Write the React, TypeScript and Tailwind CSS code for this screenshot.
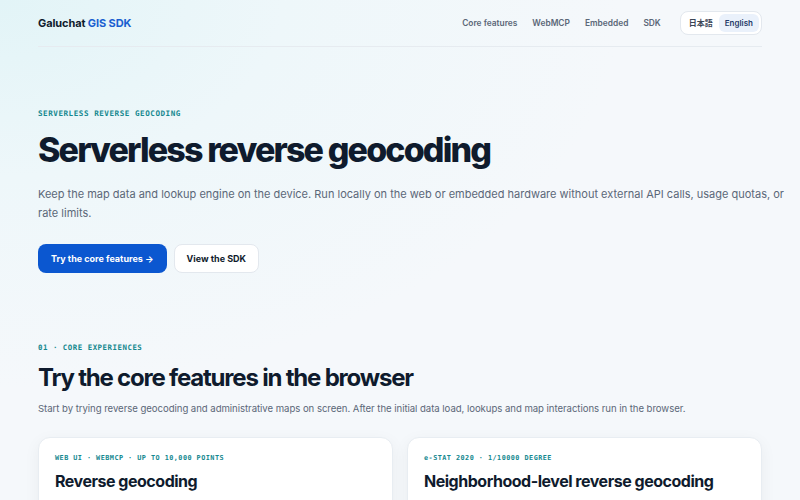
import React from "react";

const navLinks = ["Core features", "WebMCP", "Embedded", "SDK"];

const cards = [
  { eyebrow: "WEB UI · WEBMCP · UP TO 10,000 POINTS", title: "Reverse geocoding" },
  { eyebrow: "e-STAT 2020 · 1/10000 DEGREE", title: "Neighborhood-level reverse geocoding" },
];

const Eyebrow: React.FC<{ children: React.ReactNode; className?: string }> = ({ children, className }) => (
  <div
    className={`font-['DejaVu_Sans_Mono',monospace] font-bold tracking-[0.07em] text-[#14888f] ${className ?? ""}`}
  >
    {children}
  </div>
);

const App: React.FC = () => {
  return (
    <div className="h-[500px] bg-[#f5f8fb] bg-[radial-gradient(ellipse_at_0%_0%,#e2f4f7_0%,#eef7fa_25%,transparent_55%)] font-['Inter','Noto_Sans_CJK_JP',sans-serif] text-[#0f1b2d] overflow-hidden">
      <div className="w-[724px] mx-auto">
        <header className="flex items-center justify-between h-[47px] border-b border-[#e6ebf0]">
          <div className="text-[11px] font-bold tracking-[-0.01em]">
            Galuchat <span className="text-[#1a5fd0]">GIS SDK</span>
          </div>
          <div className="flex items-center">
            <nav className="flex items-center gap-[15px] text-[8.4px] font-semibold text-[#5b6778] mr-[19px]">
              {navLinks.map((l) => (
                <span key={l}>{l}</span>
              ))}
            </nav>
            <div className="flex items-center h-[24px] p-[2px] rounded-lg border border-[#e3e8ee] bg-white text-[8px] font-semibold">
              <span className="px-[6px] h-full flex items-center text-[#3c4656]">日本語</span>
              <span className="px-[6px] h-full flex items-center rounded-md bg-[#eaf1fb] text-[#1f3a68]">English</span>
            </div>
          </div>
        </header>

        <section className="pt-[61px]">
          <Eyebrow className="text-[7.6px] leading-[12px]">SERVERLESS REVERSE GEOCODING</Eyebrow>
          <h1 className="mt-[10px] text-[34px] leading-[40px] font-extrabold tracking-[-0.055em]">
            Serverless reverse geocoding
          </h1>
          <p className="mt-[15px] w-[750px] text-[11px] leading-[19px] text-[#5b6778]">
            Keep the map data and lookup engine on the device. Run locally on the web or embedded hardware without
            external API calls, usage quotas, or rate limits.
          </p>
          <div className="mt-[21px] flex gap-[7px]">
            <button className="h-[29px] px-[13px] rounded-lg bg-[#0b57d0] text-white text-[9px] font-bold">
              Try the core features →
            </button>
            <button className="h-[29px] px-[12px] rounded-lg bg-white border border-[#e3e8ee] text-[#0f1b2d] text-[9px] font-bold">
              View the SDK
            </button>
          </div>
        </section>

        <section className="pt-[70px]">
          <Eyebrow className="text-[7.4px] leading-[10px]">01 · CORE EXPERIENCES</Eyebrow>
          <h2 className="mt-[10px] text-[24px] leading-[30px] font-bold tracking-[-0.05em]">
            Try the core features in the browser
          </h2>
          <p className="mt-[9px] text-[9.6px] leading-[14px] tracking-[-0.005em] text-[#5b6778]">
            Start by trying reverse geocoding and administrative maps on screen. After the initial data load, lookups and
            map interactions run in the browser.
          </p>
          <div className="mt-[21px] grid grid-cols-2 gap-[14px]">
            {cards.map((c) => (
              <div
                key={c.title}
                className="h-[120px] rounded-xl bg-white border border-[#e8edf2] shadow-[0_4px_16px_rgba(15,27,45,0.05)] px-[16px] pt-[15px]"
              >
                <Eyebrow className="text-[6.8px] leading-[10px]">{c.eyebrow}</Eyebrow>
                <h3 className="mt-[7px] text-[16px] leading-[22px] font-bold tracking-[-0.03em]">{c.title}</h3>
              </div>
            ))}
          </div>
        </section>
      </div>
    </div>
  );
};

export default App;
